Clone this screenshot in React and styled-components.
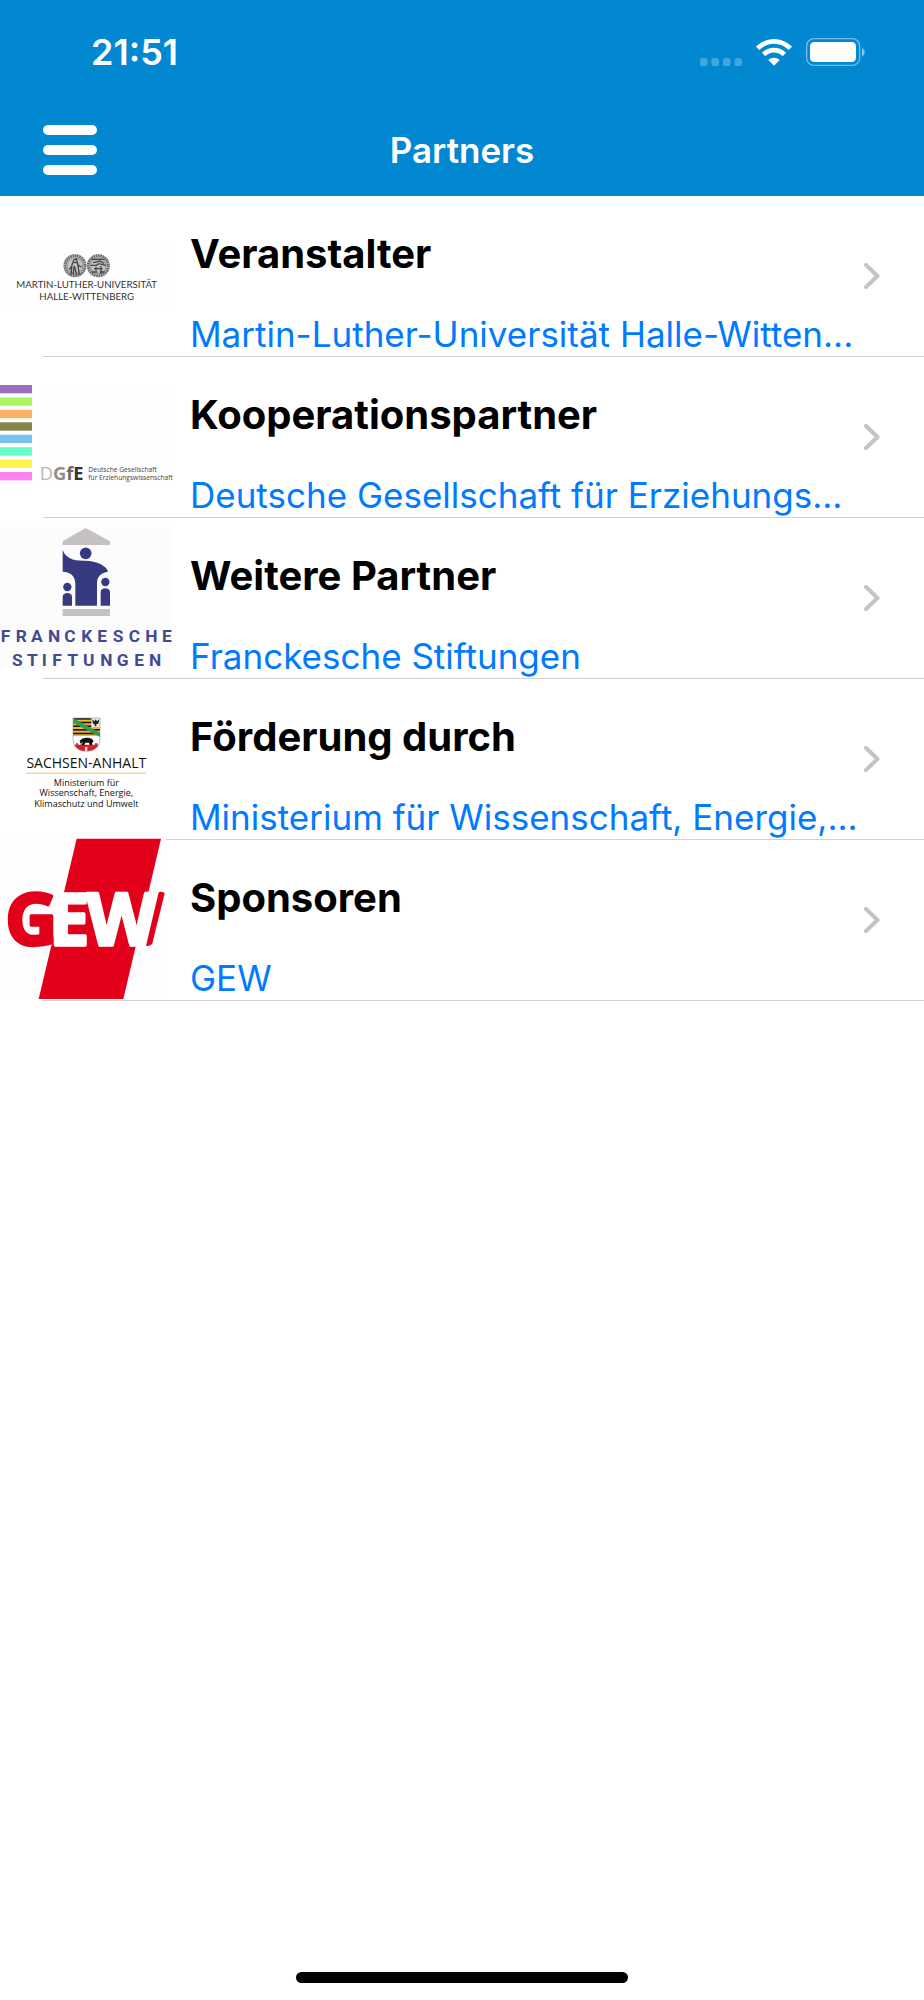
import React from "react";
import styled, { createGlobalStyle } from "styled-components";

const GlobalStyle = createGlobalStyle`
  *, *::before, *::after { box-sizing: border-box; }
  body {
    margin: 0;
    background: #fff;
    font-family: Inter, "Liberation Sans", sans-serif;
  }
`;

const Screen = styled.div`
  display: flex;
  flex-direction: column;
  min-height: 100vh;
`;

const Header = styled.header`
  background: #0288d1;
  color: #fff;
`;

const StatusBar = styled.div`
  display: flex;
  align-items: center;
  justify-content: space-between;
  height: 104px;
  padding: 0 58px 0 91px;
`;

const Clock = styled.time`
  font-size: 36px;
  line-height: 44px;
  font-weight: 600;
`;

const StatusIcons = styled.div`
  display: flex;
  align-items: center;
  gap: 14px;
`;

const NavBar = styled.div`
  display: grid;
  grid-template-columns: 1fr auto 1fr;
  align-items: center;
  height: 92px;
  padding: 0 43px;
`;

const MenuButton = styled.button`
  display: flex;
  flex-direction: column;
  justify-content: space-between;
  justify-self: start;
  width: 54px;
  height: 50px;
  padding: 0;
  border: 0;
  background: none;
`;

const MenuBar = styled.span`
  height: 10px;
  border-radius: 5px;
  background: #fff;
`;

const PageTitle = styled.h1`
  margin: 0;
  font-size: 35px;
  line-height: 44px;
  font-weight: 600;
`;

const PartnerList = styled.ul`
  flex: 1;
  margin: 0;
  padding: 0;
  list-style: none;
`;

const PartnerItem = styled.li`
  &::after {
    content: "";
    display: block;
    height: 1px;
    margin-left: 43px;
    background: #d1d1d4;
  }
`;

const PartnerLink = styled.a`
  display: flex;
  align-items: center;
  height: 160px;
  padding-right: 44px;
  color: inherit;
  text-decoration: none;
`;

const Logo = styled.svg`
  flex: none;
  width: 173px;
  height: 160px;
  overflow: visible;
`;

const PartnerText = styled.div`
  flex: 1;
  min-width: 0;
  align-self: flex-end;
  display: flex;
  flex-direction: column;
  gap: 34px;
  margin-left: 17px;
`;

const Category = styled.h2`
  margin: 0;
  font-size: 40px;
  line-height: 48px;
  font-weight: 700;
  color: #000;
`;

const PartnerName = styled.p`
  margin: 0;
  font-size: 35px;
  line-height: 44px;
  color: #007aff;
  white-space: nowrap;
  overflow: hidden;
  text-overflow: ellipsis;
`;

const HomeIndicator = styled.div`
  align-self: center;
  width: 36%;
  height: 11px;
  margin-bottom: 17px;
  border-radius: 6px;
  background: #000;
`;

const SignalIcon = () => (
  <svg width="42" height="28" viewBox="0 0 42 28" fill="#fff" opacity="0.25" aria-hidden="true">
    {[0, 11.5, 23, 34.5].map((x) => (
      <rect key={x} x={x} y="20" width="7.5" height="8" rx="2.6" />
    ))}
  </svg>
);

const WifiIcon = () => (
  <svg width="36" height="28" viewBox="0 0 108 84" aria-hidden="true">
    <g fill="none" stroke="#fff" strokeWidth="14.5">
      <path d="M5 31 C33 3 75 3 103 31" />
      <path d="M23 49.500 C41 32 67 32 85 49.500" />
    </g>
    <path fill="#fff" d="M54 83 L37 66 C47 57 61 57 71 66 Z" />
  </svg>
);

const BatteryIcon = () => (
  <svg width="60" height="28" viewBox="0 0 180 84" aria-hidden="true">
    <rect x="2" y="2" width="159" height="80" rx="22" fill="none" stroke="#fff" strokeOpacity=".45" strokeWidth="4" />
    <rect x="12" y="12" width="138" height="60" rx="13" fill="#fff" />
    <path d="M168 30 C179 36 179 50 168 56 Z" fill="#fff" opacity=".5" />
  </svg>
);

const Chevron = () => (
  <svg width="16" height="26" viewBox="0 0 16 26" aria-hidden="true">
    <path d="M2 2 L13.500 13 L2 24" fill="none" stroke="#c4c4c7" strokeWidth="4" strokeLinecap="round" strokeLinejoin="round" />
  </svg>
);

const Seal = ({ cx }) => (
  <g>
    <circle cx={cx} cy="107" r="35" fill="#b5b5b5" />
    <circle cx={cx} cy="107" r="30" fill="none" stroke="#666" strokeWidth="8" strokeDasharray="4 3" />
    <circle cx={cx} cy="107" r="23" fill="#c4c4c4" stroke="#888" strokeWidth="2" />
  </g>
);

const UniversityLogo = () => (
  <Logo viewBox="0 -102 519 480" role="img" aria-label="Martin-Luther-Universität">
    <rect x="0" y="38" width="516" height="202" fill="#fefefe" />
    <Seal cx="225" />
    <Seal cx="295" />
    <g stroke="#444" strokeWidth="4" fill="none">
      <path d="M213 134 L216 104 L222 90 L229 86 L233 100 L238 134 M219 134 L223 108 L230 134 M208 118 L216 108 M234 104 L244 112 M222 98 H232" />
      <path d="M275 88 H314 M280 98 L300 93 L312 100 M272 106 H290 L296 101 L318 106 M282 116 H308 M276 126 H292 M300 126 H314 M288 110 V122 M303 108 V132" />
    </g>
    <g fontFamily="Lato, sans-serif" fontSize="29" fill="#333" textAnchor="middle">
      <text x="260" y="173">MARTIN-LUTHER-UNIVERSITÄT</text>
      <text x="260" y="210">HALLE-WITTENBERG</text>
    </g>
  </Logo>
);

const stripes = ["#9a6fc0", "#a9f55f", "#ffb066", "#85854c", "#7cc1f2", "#66ffcc", "#fff24d", "#ff80f0"];

const DgfeLogo = () => (
  <Logo viewBox="0 -39 519 480" role="img" aria-label="DGfE">
    <rect x="96" y="45" width="421" height="290" fill="#fefefe" />
    {stripes.map((color, i) => (
      <rect key={color} x="0" y={45 + i * 37.3} width="96" height="25" fill={color} />
    ))}
    <g fontFamily="'Open Sans', sans-serif">
      <text x="119" y="330" fontSize="55" fontWeight="700">
        <tspan fill="#b5b5b5" fontWeight="500">D</tspan>
        <tspan fill="#8d8d8d">G</tspan>
        <tspan fill="#6c6c6c">f</tspan>
        <tspan fill="#333">E</tspan>
      </text>
      <g fontSize="20" fill="#444">
        <text x="265" y="307">Deutsche Gesellschaft</text>
        <text x="265" y="331">für Erziehungswissenschaft</text>
      </g>
    </g>
  </Logo>
);

const FranckeLogo = () => (
  <Logo viewBox="0 9 519 480" role="img" aria-label="Franckesche Stiftungen">
    <rect x="0" y="37" width="517" height="424" fill="#fcfcfc" />
    <path d="M257 39 L330 79 V90 H188 V79 Z M188 282 H330 V303 H188 Z" fill="#c5c1c2" />
    <g fill="#363a80">
      <circle cx="257" cy="115" r="17.500" />
      <path d="M188 105 C197 130 220 138 256 137 C290 137 320 152 324 170 C304 173 291 184 291 205 V272 H226 V205 C226 184 212 171 188 170 Z" />
      <circle cx="202" cy="216" r="12.500" />
      <circle cx="316" cy="201" r="12.500" />
      <path d="M188 272 V245 C188 230 216 230 216 245 V272 Z M302 272 V231 C302 216 330 216 330 231 V272 Z" />
    </g>
    <g fontFamily="Roboto, 'Liberation Sans', sans-serif" fontSize="52" fontWeight="700" fill="#444a8f">
      <text x="2 47 93 144 193 244 292 338 386 436 486" y="381">FRANCKESCHE</text>
      <text x="36 81 125 157 202 249 301 350 403 447" y="453">STIFTUNGEN</text>
    </g>
  </Logo>
);

const SachsenAnhaltLogo = () => (
  <Logo viewBox="0 -33 519 480" role="img" aria-label="Sachsen-Anhalt">
    <clipPath id="shield">
      <path d="M219 84 H300 V145 C300 170 285 184 259 184 C233 184 219 170 219 145 Z" />
    </clipPath>
    <g clipPath="url(#shield)">
      <rect x="219" y="84" width="81" height="100" fill="#fff" />
      <rect x="219" y="84" width="81" height="54" fill="#f3b52e" />
      {[84, 95, 106, 117, 128].map((y) => (
        <rect key={y} x="219" y={y} width="81" height="5" fill="#1d1a12" />
      ))}
      <path d="M219 84 L300 129 V141 L219 98 Z" fill="#2f9b55" />
      <rect x="274" y="84" width="26" height="27" fill="#eee" />
      <path d="M276 88 L283 94 L287 88 L291 94 L298 88 L295 101 L289 103 V109 H284 V103 L279 101 Z" fill="#222" />
      <path d="M219 164 H228 V160 H234 V164 H242 V160 H249 V164 H270 V160 H277 V164 H285 V160 H292 V164 H300 V184 H219 Z" fill="#d3202c" />
      <path d="M239 153 C246 142 264 140 276 147 L281 154 L276 159 V165 H269 L267 158 L256 158 L253 166 H246 L248 157 L241 160 Z" fill="#111" />
      <rect x="255" y="171" width="7" height="13" fill="#f7e8e4" />
    </g>
    <path d="M219 84 H300 V145 C300 170 285 184 259 184 C233 184 219 170 219 145 Z" fill="none" stroke="#999" strokeWidth="2" />
    <rect x="79" y="248" width="360" height="3" fill="#efc15c" />
    <g fontFamily="'Open Sans', sans-serif" fill="#111" textAnchor="middle" fontWeight="500">
      <text x="259" y="235" fontSize="42">SACHSEN-ANHALT</text>
      <g fontSize="27">
        <text x="259" y="287">Ministerium für</text>
        <text x="259" y="319">Wissenschaft, Energie,</text>
        <text x="259" y="350">Klimaschutz und Umwelt</text>
      </g>
    </g>
  </Logo>
);

const GewLogo = () => (
  <Logo viewBox="0 30 519 480" role="img" aria-label="GEW">
    <rect x="18" y="26" width="480" height="481" fill="#fdfdfd" />
    <path d="M230 26 H483 L370 507 H116 Z" fill="#e2001a" />
    <text
      x="16 147 260"
      y="344"
      fontFamily="'Open Sans', sans-serif"
      fontSize="216"
      fontWeight="700"
      strokeLinejoin="round"
      strokeWidth="10"
    >
      <tspan fill="#e2001a" stroke="#e2001a">G</tspan>
      <tspan fill="#fff" stroke="#fff">EW</tspan>
    </text>
    <path d="M476 187 Q485 183 494 190 L457 340 Q452 349 438 348 Z" fill="#e2001a" />
  </Logo>
);

const partners = [
  { category: "Veranstalter", name: "Martin-Luther-Universität Halle-Witten...", Mark: UniversityLogo },
  { category: "Kooperationspartner", name: "Deutsche Gesellschaft für Erziehungs...", Mark: DgfeLogo },
  { category: "Weitere Partner", name: "Franckesche Stiftungen", Mark: FranckeLogo },
  { category: "Förderung durch", name: "Ministerium für Wissenschaft, Energie,...", Mark: SachsenAnhaltLogo },
  { category: "Sponsoren", name: "GEW", Mark: GewLogo },
];

export default function App() {
  return (
    <Screen>
      <GlobalStyle />
      <Header>
        <StatusBar>
          <Clock>21:51</Clock>
          <StatusIcons>
            <SignalIcon />
            <WifiIcon />
            <BatteryIcon />
          </StatusIcons>
        </StatusBar>
        <NavBar>
          <MenuButton type="button" aria-label="Menu">
            <MenuBar />
            <MenuBar />
            <MenuBar />
          </MenuButton>
          <PageTitle>Partners</PageTitle>
        </NavBar>
      </Header>
      <PartnerList>
        {partners.map(({ category, name, Mark }) => (
          <PartnerItem key={category}>
            <PartnerLink href="#">
              <Mark />
              <PartnerText>
                <Category>{category}</Category>
                <PartnerName>{name}</PartnerName>
              </PartnerText>
              <Chevron />
            </PartnerLink>
          </PartnerItem>
        ))}
      </PartnerList>
      <HomeIndicator />
    </Screen>
  );
}
